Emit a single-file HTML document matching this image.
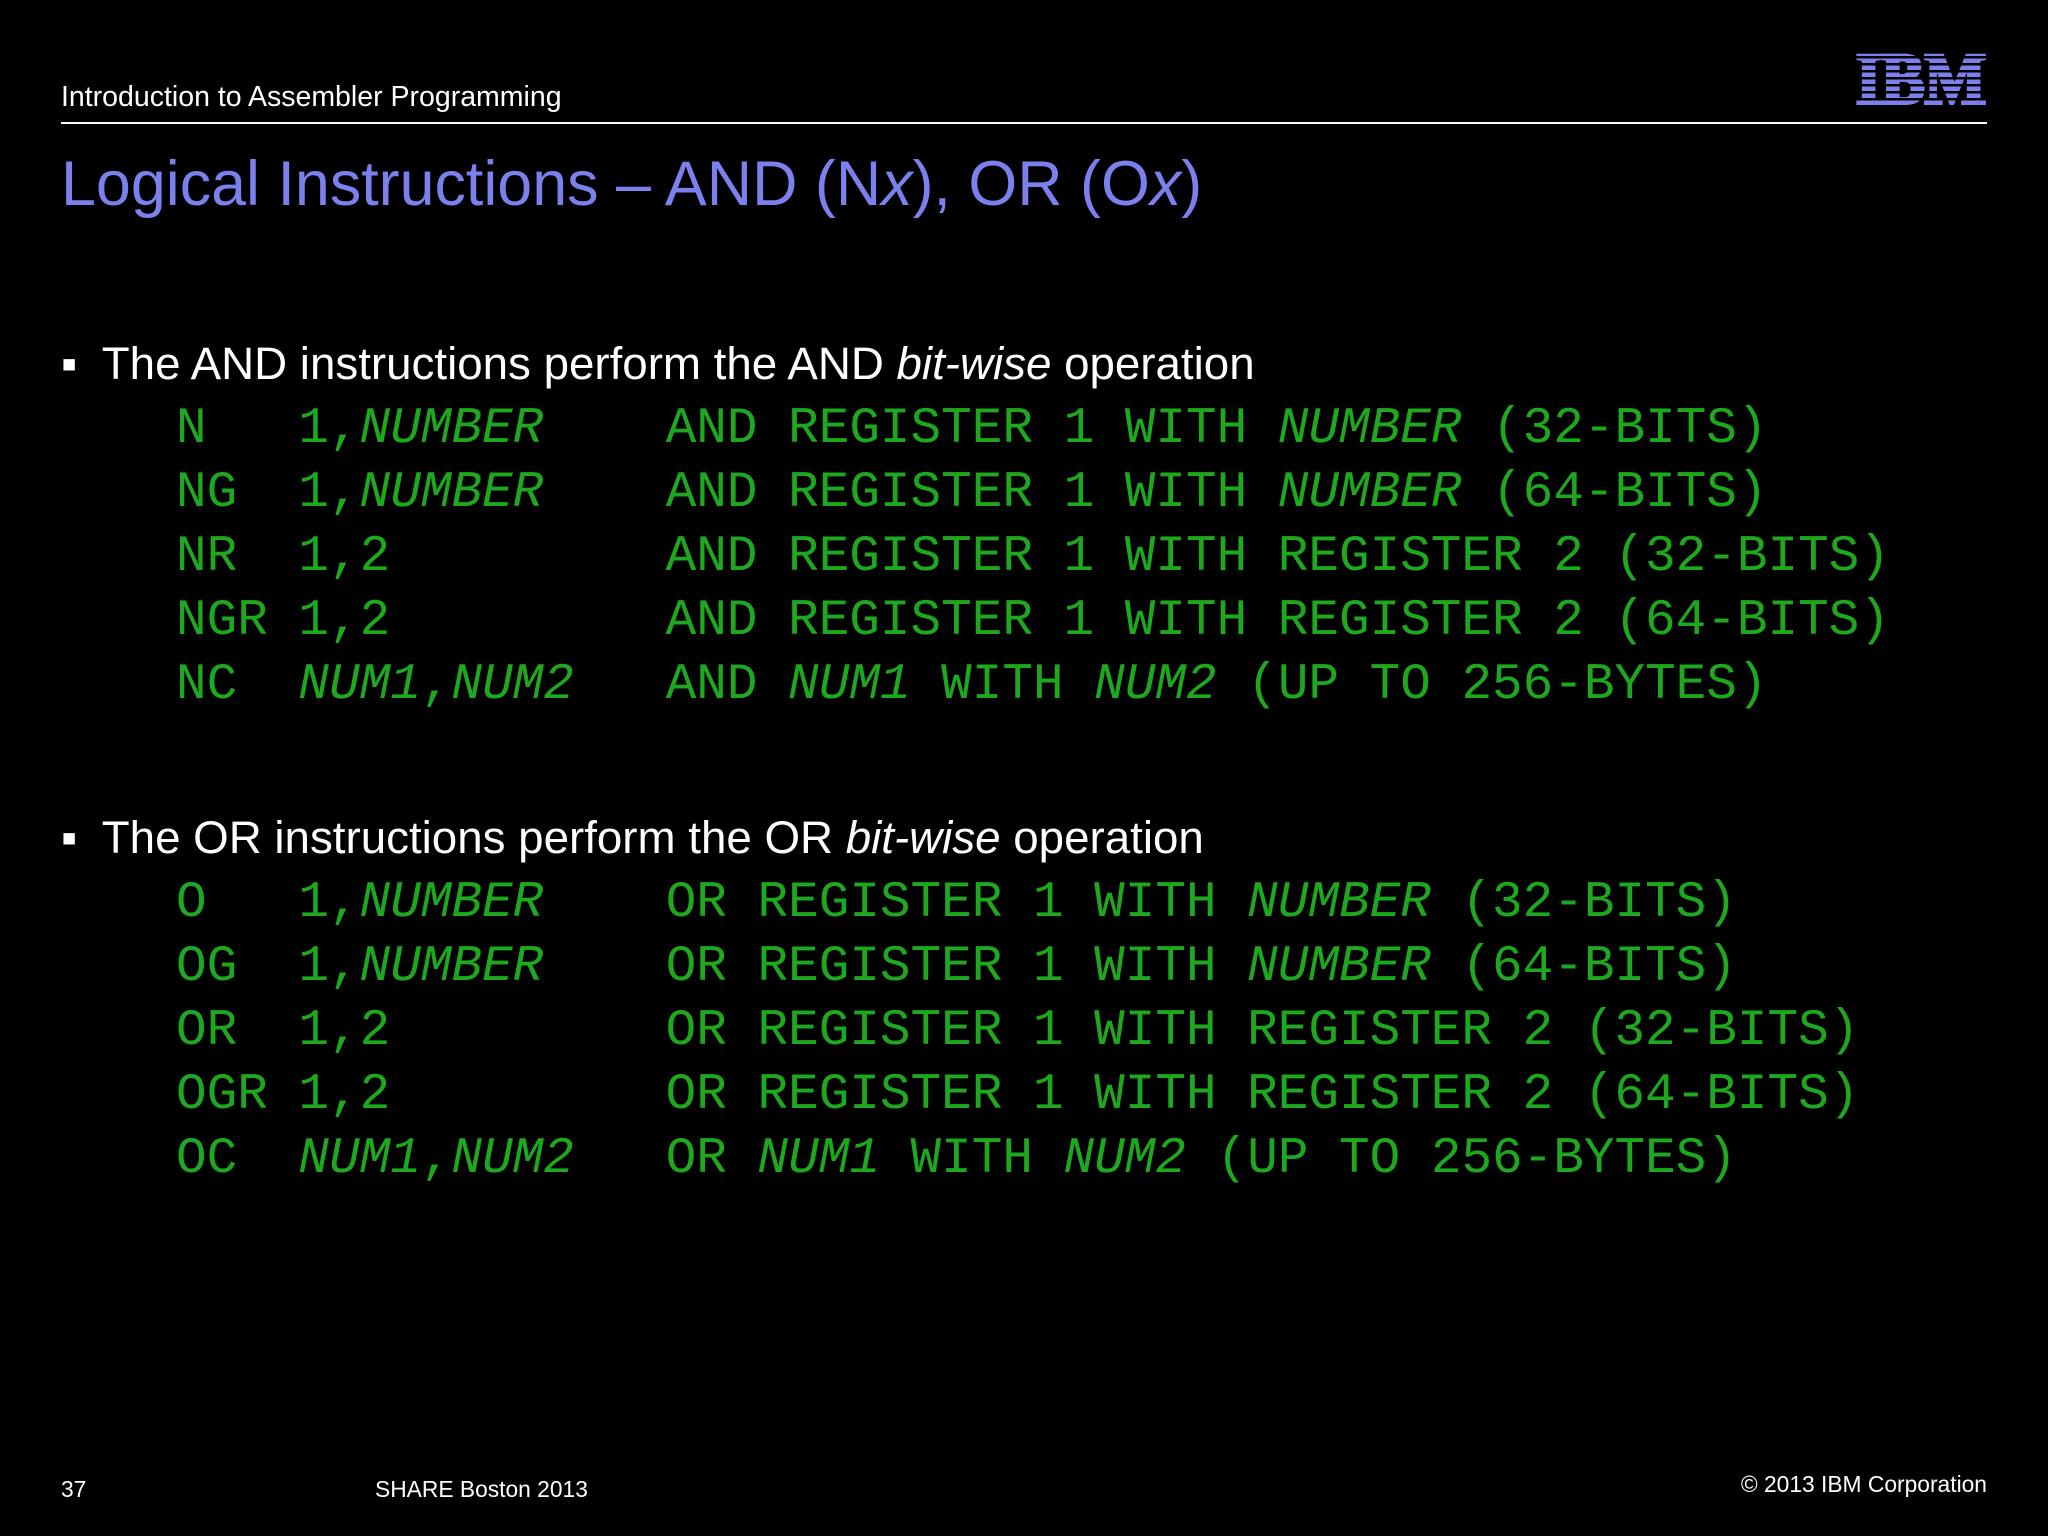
<!DOCTYPE html>
<html><head><meta charset="utf-8"><style>
body{margin:0;width:2048px;height:1536px;background:#000;position:relative;overflow:hidden;font-family:"Liberation Sans",Arial,sans-serif;color:#fff}
.a{position:absolute;white-space:nowrap}
pre{margin:0;position:absolute;left:176px;font-family:"Liberation Mono","Courier New",monospace;font-size:51px;line-height:64px;color:#1ea81e}
i{font-style:italic}
</style></head><body>
<div class="a" style="left:61px;top:81px;font-size:28.5px">Introduction to Assembler Programming</div>
<div class="a" style="left:61px;top:122px;width:1926px;height:2px;background:#fff"></div>
<svg class="a" style="left:1853px;top:50px" width="136" height="56" viewBox="0 0 136 56">
<text x="68" y="53" text-anchor="middle" font-family="Liberation Serif,serif" font-weight="bold" font-size="72" fill="#7b80ec" stroke="#7b80ec" stroke-width="4" textLength="130" lengthAdjust="spacingAndGlyphs">IBM</text>
<g fill="#000"><rect x="0" y="6" width="136" height="2.5"/><rect x="0" y="13" width="136" height="2.5"/><rect x="0" y="20" width="136" height="2.5"/><rect x="0" y="27" width="136" height="2.5"/><rect x="0" y="34" width="136" height="2.5"/><rect x="0" y="41" width="136" height="2.5"/><rect x="0" y="48" width="136" height="2.5"/></g>
</svg>
<div class="a" style="left:61px;top:148px;font-size:62.8px;color:#7b80ec">Logical Instructions – AND (N<i>x</i>), OR (O<i>x</i>)</div>
<div class="a" style="left:61px;top:338px;font-size:45.7px">▪&nbsp; The AND instructions perform the AND <i>bit-wise</i> operation</div>
<pre style="top:398px">N   1,<i>NUMBER</i>    AND REGISTER 1 WITH <i>NUMBER</i> (32-BITS)
NG  1,<i>NUMBER</i>    AND REGISTER 1 WITH <i>NUMBER</i> (64-BITS)
NR  1,2         AND REGISTER 1 WITH REGISTER 2 (32-BITS)
NGR 1,2         AND REGISTER 1 WITH REGISTER 2 (64-BITS)
NC  <i>NUM1</i>,<i>NUM2</i>   AND <i>NUM1</i> WITH <i>NUM2</i> (UP TO 256-BYTES)</pre>
<div class="a" style="left:61px;top:812px;font-size:45.7px">▪&nbsp; The OR instructions perform the OR <i>bit-wise</i> operation</div>
<pre style="top:872px">O   1,<i>NUMBER</i>    OR REGISTER 1 WITH <i>NUMBER</i> (32-BITS)
OG  1,<i>NUMBER</i>    OR REGISTER 1 WITH <i>NUMBER</i> (64-BITS)
OR  1,2         OR REGISTER 1 WITH REGISTER 2 (32-BITS)
OGR 1,2         OR REGISTER 1 WITH REGISTER 2 (64-BITS)
OC  <i>NUM1</i>,<i>NUM2</i>   OR <i>NUM1</i> WITH <i>NUM2</i> (UP TO 256-BYTES)</pre>
<div class="a" style="left:61px;top:1476px;font-size:22.8px">37</div>
<div class="a" style="left:375px;top:1476px;font-size:22.8px">SHARE Boston 2013</div>
<div class="a" style="right:61px;top:1471px;font-size:22.8px">© 2013 IBM Corporation</div>
</body></html>
